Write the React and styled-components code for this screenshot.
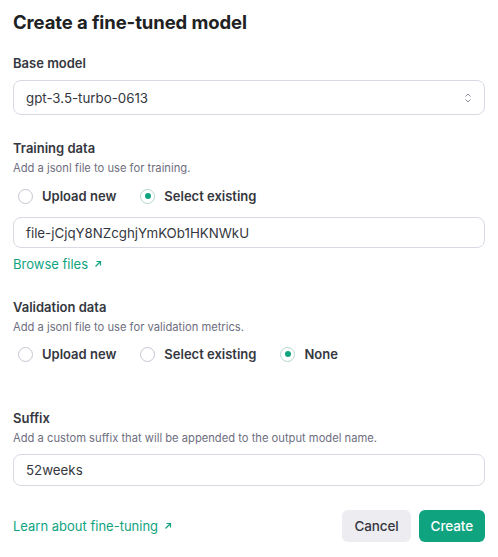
import React from 'react'
import styled, { createGlobalStyle } from 'styled-components'

const GlobalStyle = createGlobalStyle`
  html, body {
    margin: 0;
    padding: 0;
    background: #ffffff;
  }
  body {
    font-family: Inter, "Noto Sans", sans-serif;
    color: #202123;
    -webkit-font-smoothing: antialiased;
  }
`

const Page = styled.div`
  width: 498px;
  height: 557px;
  box-sizing: border-box;
  padding: 9px 13px 0 13px;
  display: flex;
  flex-direction: column;
`

const Title = styled.h1`
  margin: 0;
  font-size: 18.5px;
  line-height: 26px;
  font-weight: 700;
  color: #202123;
  letter-spacing: -0.1px;
`

const Section = styled.div`
  display: flex;
  flex-direction: column;
  margin-top: ${p => p.$top}px;
`

const Label = styled.div`
  font-size: 13px;
  line-height: 18px;
  font-weight: 600;
  color: #353740;
`

const Hint = styled.div`
  font-size: 11.2px;
  line-height: 16px;
  color: #6e6e80;
  margin-top: 3px;
`

const Field = styled.div`
  box-sizing: border-box;
  height: ${p => p.$h}px;
  margin-top: ${p => p.$top}px;
  border: 1px solid #d9d9e3;
  border-radius: 8px;
  padding: 0 12px;
  display: flex;
  align-items: center;
  justify-content: space-between;
  font-size: 13.3px;
  color: #353740;
`

const RadioRow = styled.div`
  display: flex;
  align-items: center;
  margin-top: ${p => p.$top}px;
  padding-left: 5px;
`

const RadioItem = styled.label`
  display: flex;
  align-items: center;
  font-size: 13px;
  font-weight: 600;
  color: #353740;
  margin-right: 24px;
`

const Circle = styled.span`
  box-sizing: border-box;
  width: 15px;
  height: 15px;
  border-radius: 50%;
  border: 1px solid ${p => (p.$on ? '#b5d6cd' : '#c5c5d2')};
  margin-right: 9px;
  display: flex;
  align-items: center;
  justify-content: center;
  &::after {
    content: '';
    width: 6px;
    height: 6px;
    border-radius: 50%;
    background: ${p => (p.$on ? '#10a37f' : 'transparent')};
  }
`

const Link = styled.a`
  display: flex;
  align-items: center;
  gap: 6px;
  color: #10a37f;
  font-size: 13px;
  line-height: 18px;
  text-decoration: none;
  margin-top: ${p => p.$top || 0}px;
`

const Footer = styled.div`
  display: flex;
  align-items: center;
  justify-content: space-between;
  margin-top: 24px;
`

const Buttons = styled.div`
  display: flex;
  gap: 8px;
`

const Button = styled.button`
  height: 32px;
  padding: 0 12px;
  border: none;
  border-radius: 6px;
  font-family: inherit;
  font-size: 13.5px;
  font-weight: 500;
  letter-spacing: -0.1px;
  background: ${p => (p.$primary ? '#10a37f' : '#ececf1')};
  color: ${p => (p.$primary ? '#ffffff' : '#353740')};
`

const Arrow = () => (
  <svg width="8" height="8" viewBox="0 0 8 8" fill="none">
    <path d="M1.5 6.5L6.5 1.5M2.5 1.5H6.5V5.5" stroke="#10a37f" strokeWidth="1.2" />
  </svg>
)

const Chevrons = () => (
  <svg width="8" height="12" viewBox="0 0 8 12" fill="none">
    <path d="M1.5 4.5L4 2L6.5 4.5M1.5 7.5L4 10L6.5 7.5" stroke="#8e8ea0" strokeWidth="1" />
  </svg>
)

const Radio = ({ on, children }) => (
  <RadioItem>
    <Circle $on={on} />
    {children}
  </RadioItem>
)

export default function App() {
  return (
    <>
      <GlobalStyle />
      <Page>
        <Title>Create a fine-tuned model</Title>

        <Section $top={19}>
          <Label>Base model</Label>
          <Field $h={35} $top={8}>
            gpt-3.5-turbo-0613
            <Chevrons />
          </Field>
        </Section>

        <Section $top={24}>
          <Label>Training data</Label>
          <Hint>Add a jsonl file to use for training.</Hint>
          <RadioRow $top={12}>
            <Radio>Upload new</Radio>
            <Radio on>Select existing</Radio>
          </RadioRow>
          <Field $h={31} $top={13}>file-jCjqY8NZcghjYmKOb1HKNWkU</Field>
          <Link $top={7}>
            Browse files <Arrow />
          </Link>
        </Section>

        <Section $top={25}>
          <Label>Validation data</Label>
          <Hint>Add a jsonl file to use for validation metrics.</Hint>
          <RadioRow $top={11}>
            <Radio>Upload new</Radio>
            <Radio>Select existing</Radio>
            <Radio on>None</Radio>
          </RadioRow>
        </Section>

        <Section $top={47}>
          <Label>Suffix</Label>
          <Hint>Add a custom suffix that will be appended to the output model name.</Hint>
          <Field $h={32} $top={8}>52weeks</Field>
        </Section>

        <Footer>
          <Link>
            Learn about fine-tuning <Arrow />
          </Link>
          <Buttons>
            <Button>Cancel</Button>
            <Button $primary>Create</Button>
          </Buttons>
        </Footer>
      </Page>
    </>
  )
}
